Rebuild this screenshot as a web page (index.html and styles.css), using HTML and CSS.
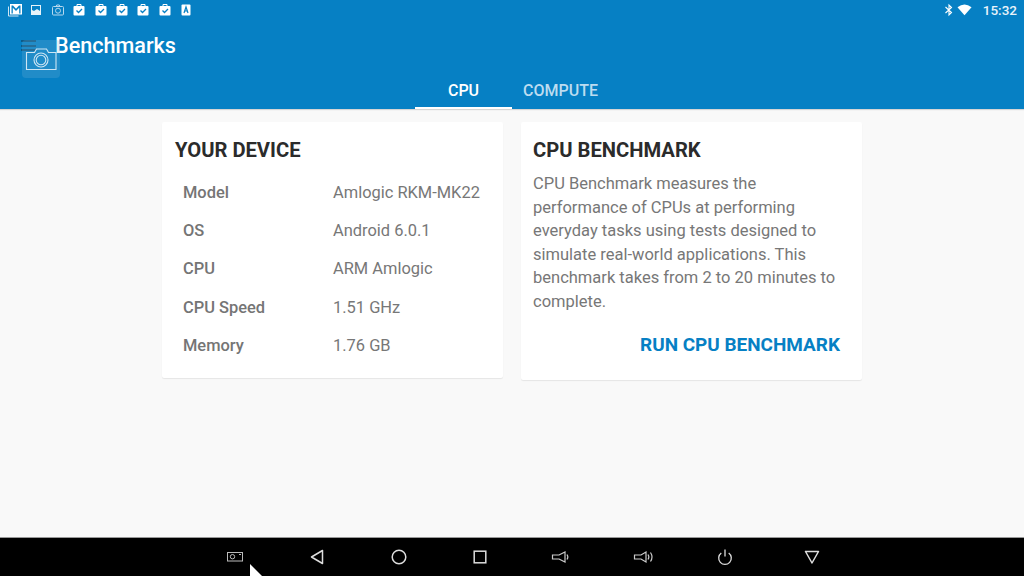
FILE: index.html
```html
<!DOCTYPE html>
<html lang="en">
<head>
<meta charset="utf-8">
<title>Benchmarks</title>
<link rel="stylesheet" href="styles.css">
</head>
<body>
<div class="screen">
  <header class="top">
    <div class="status">
      <div class="notifs">
        <svg class="ni" viewBox="0 0 14 14"><path d="M0.500 3.500v9.500h10" fill="none" stroke="#cfe6f4" stroke-width="1"/><rect x="2" y="1" width="12" height="10.500" fill="#fff"/><path d="M3.500 10.500V2.500h1.500L8 5.800 11 2.500h1.500v8h-1.300V4.800L8 8 4.800 4.800v5.700z" fill="#0680c4"/></svg>
        <svg class="ni" viewBox="0 0 14 14"><rect x="2" y="2" width="10" height="10" fill="#fff" opacity=".9"/><path d="M3 3h8v5L8 6 5 8 3 7z" fill="#0680c4"/></svg>
        <svg class="ni" viewBox="0 0 14 14" fill="none" stroke="#b5d8ee"><rect x="1.500" y="3.500" width="11" height="8.500" rx="1"/><circle cx="7" cy="7.700" r="2.500"/><path d="M5 3.500l.7-1.500h2.600l.7 1.500"/></svg>
        <svg class="ni" viewBox="0 0 14 14"><use href="#bag"/></svg>
        <svg class="ni" viewBox="0 0 14 14"><use href="#bag"/></svg>
        <svg class="ni" viewBox="0 0 14 14"><use href="#bag"/></svg>
        <svg class="ni" viewBox="0 0 14 14"><use href="#bag"/></svg>
        <svg class="ni" viewBox="0 0 14 14"><use href="#bag"/></svg>
        <svg class="ni" viewBox="0 0 14 14"><rect x="2.500" y="1.500" width="9" height="11" rx="1" fill="#fff"/><path d="M5 10l2-6 2 6M5.800 8h2.400" fill="none" stroke="#0680c4" stroke-width="1.200"/></svg>
      </div>
      <div class="sys">
        <svg class="bt" viewBox="0 0 10 14" fill="none" stroke="#fff" stroke-width="1.100"><path d="M1.500 4l6 5.500L5 12V2l2.500 2.500-6 5.500"/></svg>
        <svg class="wifi" viewBox="0 0 16 12"><path d="M0.500 3Q8-2.500 15.500 3L8 11.500z" fill="#fff"/></svg>
        <span class="clock">15:32</span>
      </div>
    </div>
    <div class="titlebar"><h1 class="title">Benchmarks</h1></div>
    <nav class="tabs">
      <div class="tab tab-on">CPU</div>
      <div class="tab">COMPUTE</div>
    </nav>
  </header>

  <main class="content">
    <section class="card card-device">
      <h2 class="card-title">YOUR DEVICE</h2>
      <dl class="specs">
        <div class="spec"><dt>Model</dt><dd>Amlogic RKM-MK22</dd></div>
        <div class="spec"><dt>OS</dt><dd>Android 6.0.1</dd></div>
        <div class="spec"><dt>CPU</dt><dd>ARM Amlogic</dd></div>
        <div class="spec"><dt>CPU Speed</dt><dd>1.51 GHz</dd></div>
        <div class="spec"><dt>Memory</dt><dd>1.76 GB</dd></div>
      </dl>
    </section>
    <section class="card card-bench">
      <h2 class="card-title">CPU BENCHMARK</h2>
      <p class="desc">CPU Benchmark measures the performance of CPUs at performing everyday tasks using tests designed to simulate real-world applications. This benchmark takes from 2 to 20 minutes to complete.</p>
      <div class="run">RUN CPU BENCHMARK</div>
    </section>
  </main>

  <footer class="navbar">
    <svg class="nb nb-shot" viewBox="0 0 18 12" fill="none" stroke="#bbb"><rect x="1.500" y="1.500" width="15" height="8.500"/><circle cx="6.500" cy="5.700" r="2.200"/><path d="M13 3.500h2"/></svg>
    <svg class="nb nb-back" viewBox="0 0 16 18" fill="none" stroke="#ddd" stroke-width="1.500"><path d="M13.500 2.500v13L2.500 9z" stroke-linejoin="round"/></svg>
    <svg class="nb nb-home" viewBox="0 0 18 18" fill="none" stroke="#ddd" stroke-width="1.500"><circle cx="9" cy="9" r="6.800"/></svg>
    <svg class="nb nb-rec" viewBox="0 0 16 16" fill="none" stroke="#ddd" stroke-width="1.500"><rect x="2.200" y="2.200" width="11.600" height="11.600"/></svg>
    <svg class="nb nb-voldn" viewBox="0 0 20 14" fill="none" stroke="#ccc" stroke-width="1.200"><path d="M1.500 5h6.500l6-3v10l-6-3H1.500z"/><path d="M16 4.500q1.700 2.500 0 5"/></svg>
    <svg class="nb nb-volup" viewBox="0 0 22 14" fill="none" stroke="#ccc" stroke-width="1.200"><path d="M1.500 5h6.500l5-3v10l-5-3H1.500z"/><path d="M15 4.500q1.700 2.500 0 5M17.500 2.500q3 4.500 0 9"/></svg>
    <svg class="nb nb-power" viewBox="0 0 16 18" fill="none" stroke="#ddd" stroke-width="1.300"><path d="M8 1.500v7"/><path d="M4.300 5a6.300 6.300 0 1 0 7.400 0"/></svg>
    <svg class="nb nb-down" viewBox="0 0 16 16" fill="none" stroke="#ddd" stroke-width="1.500"><path d="M1.500 2.500h13L8 14z" stroke-linejoin="round"/></svg>
  </footer>

  <div class="overlay-menu"><i></i><i></i><i></i></div>
  <div class="overlay-cam">
    <svg viewBox="0 0 38 38" fill="none" stroke="#cfe6f4" stroke-width="1.100"><path d="M4.500 12.500h8l2-3.500h10l2 3.500h7.500v17h-29.500z"/><circle cx="19" cy="20" r="7"/><circle cx="19" cy="20" r="4.800"/></svg>
  </div>
  <svg class="cursor" viewBox="0 0 16 16"><path d="M0 0l14 14H0z" fill="#fff"/></svg>

  <svg class="defs" width="0" height="0"><defs><g id="bag"><rect x="1.500" y="3" width="11" height="9.500" rx="1" fill="#fff"/><path d="M5 3V1.500h4V3" fill="none" stroke="#fff"/><path d="M4.500 7.500l2 2 3.500-3.500" fill="none" stroke="#0680c4" stroke-width="1.300"/></g></defs></svg>
</div>
</body>
</html>
```
FILE: styles.css
```css
* { box-sizing: border-box; margin: 0; padding: 0; }
html, body { width: 1024px; height: 576px; overflow: hidden; }
body { font-family: Roboto, "Liberation Sans", sans-serif; background: #f9f9f9; }
.screen { position: relative; width: 1024px; height: 576px; display: flex; flex-direction: column; }

.top { background: #0680c4; height: 109px; flex: none; display: flex; flex-direction: column; box-shadow: 0 1px 1px rgba(0,0,0,.14); }
.status { height: 19px; display: flex; justify-content: space-between; align-items: center; padding: 0 7px 0 8px; }
.notifs { display: flex; gap: 7.400px; }
.ni { width: 14px; height: 14px; display: block; }
.sys { display: flex; align-items: center; }
.bt { width: 10px; height: 14px; margin-right: 3px; }
.wifi { width: 15px; height: 12px; margin-right: 11px; }
.clock { color: #e8f3fa; font-size: 13.500px; font-weight: 500; }

.titlebar { height: 48px; padding: 4px 0 0 55px; display: flex; align-items: center; }
.title { color: #fff; font-size: 21.600px; font-weight: 500; }

.tabs { height: 42px; display: flex; padding-left: 415px; }
.tab { width: 97px; padding-top: 7px; text-align: center; color: #bcdcf0; font-size: 16px; font-weight: 500; line-height: 34px; height: 42px; }
.tab-on { color: #fff; border-bottom: 2px solid #fff; }

.content { flex: 1; display: flex; justify-content: center; align-items: flex-start; gap: 18px; padding-top: 13px; }
.card { width: 341px; background: #fff; border-radius: 2px; box-shadow: 0 1px 1px rgba(0,0,0,.08); padding-top: 15px; }
.card-device { height: 256px; padding-left: 13px; padding-right: 13px; }
.card-bench { height: 258px; padding-left: 12px; padding-right: 22px; }
.card-title { font-size: 20.200px; font-weight: 700; color: #2b2b2b; line-height: 26px; }

.specs { margin-top: 10px; padding-left: 8px; }
.spec { display: flex; height: 38.300px; align-items: center; font-size: 16.450px; color: #757575; }
.spec dt { width: 150px; font-weight: 500; }
.spec dd { color: #777; }

.desc { margin-top: 9px; font-size: 16.500px; line-height: 23.600px; color: #777; }
.run { margin-top: 19px; text-align: right; font-size: 18.950px; font-weight: 700; color: #0680c4; line-height: 24px; }

.navbar { position: relative; height: 39px; flex: none; background: #000; border-top: 1px solid #999; display: flex; align-items: center; }
.nb { display: block; flex: none; }
.nb-shot { width: 18px; height: 12px; margin-left: 226px; margin-top: -1px; }
.nb-back { width: 16px; height: 18px; margin-left: 65px; }
.nb-home { width: 18px; height: 18px; margin-left: 65px; }
.nb-rec { width: 16px; height: 16px; margin-left: 64px; }
.nb-voldn { width: 20px; height: 14px; margin-left: 63px; }
.nb-volup { width: 22px; height: 14px; margin-left: 62px; }
.nb-power { width: 16px; height: 18px; margin-left: 62px; }
.nb-down { width: 16px; height: 16px; margin-left: 71px; }

.overlay-menu { position: absolute; left: 21px; top: 40px; width: 15px; display: flex; flex-direction: column; gap: 2.500px; }
.overlay-menu i { display: block; height: 2px; background: #0b5a88; }
.overlay-cam { position: absolute; left: 22px; top: 40px; width: 38px; height: 38px; border-radius: 4px; background: rgba(130,180,215,.22); }
.overlay-cam svg { display: block; width: 38px; height: 38px; }
.cursor { position: absolute; left: 250px; top: 564px; width: 14px; height: 14px; }
.defs { position: absolute; }
```
